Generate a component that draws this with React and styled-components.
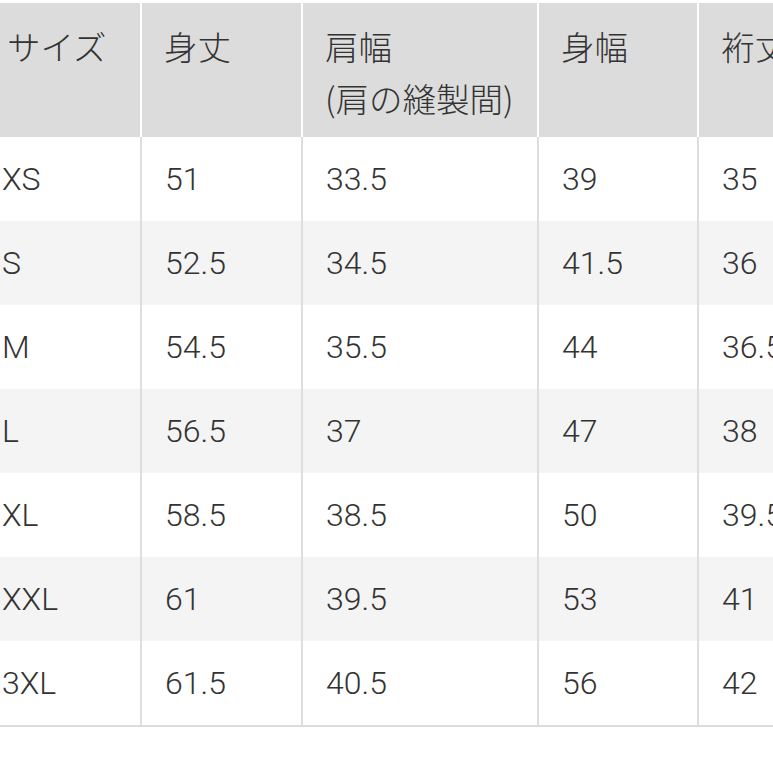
import React from "react";
import styled, { createGlobalStyle } from "styled-components";

const Global = createGlobalStyle`
  html, body { margin: 0; padding: 0; background: #fff; overflow: hidden; }
  body { font-family: "Roboto", "Noto Sans CJK JP", sans-serif; }
`;

const Page = styled.div`
  width: 773px;
  height: 773px;
  overflow: hidden;
  padding-top: 3px;
  box-sizing: border-box;
`;

const Table = styled.div`
  margin-left: -15px;
  width: 900px;
  border-bottom: 2px solid #dcdcdc;
`;

const cols = "155px 161px 236px 160px 188px";

const HeadRow = styled.div`
  display: grid;
  grid-template-columns: ${cols};
  height: 134px;
`;

const HeadCell = styled.div`
  background: #dcdcdc;
  border-left: ${(p) => (p.$first ? "none" : "2px solid #fff")};
  padding: 17px 0 0 ${(p) => (p.$first ? "22px" : "22px")};
  font-family: "Noto Sans CJK JP", "Roboto", sans-serif;
  font-weight: 300;
  font-size: 33.5px;
  line-height: 52px;
  color: #333;
  white-space: nowrap;
`;

const Row = styled.div`
  display: grid;
  grid-template-columns: ${cols};
  height: 84px;
  background: ${(p) => (p.$alt ? "#f4f4f4" : "#fff")};
`;

const Cell = styled.div`
  display: flex;
  align-items: center;
  border-left: ${(p) => (p.$first ? "none" : "2px solid #dedede")};
  padding-left: ${(p) => (p.$first ? "17px" : "23px")};
  font-family: "Roboto", "Noto Sans CJK JP", sans-serif;
  font-weight: 300;
  font-size: 32px;
  color: #333;
  white-space: nowrap;
`;

const headers = [["サイズ"], ["身丈"], ["肩幅", "(肩の縫製間)"], ["身幅"], ["裄丈"]];
const rows = [
  ["XS", "51", "33.5", "39", "35"],
  ["S", "52.5", "34.5", "41.5", "36"],
  ["M", "54.5", "35.5", "44", "36.5"],
  ["L", "56.5", "37", "47", "38"],
  ["XL", "58.5", "38.5", "50", "39.5"],
  ["XXL", "61", "39.5", "53", "41"],
  ["3XL", "61.5", "40.5", "56", "42"],
];

export default function App() {
  return (
    <Page>
      <Global />
      <Table>
        <HeadRow>
          {headers.map((h, i) => (
            <HeadCell key={i} $first={i === 0}>
              {h.map((line, j) => (
                <div key={j}>{line}</div>
              ))}
            </HeadCell>
          ))}
        </HeadRow>
        {rows.map((r, i) => (
          <Row key={i} $alt={i % 2 === 1}>
            {r.map((v, j) => (
              <Cell key={j} $first={j === 0}>
                {v}
              </Cell>
            ))}
          </Row>
        ))}
      </Table>
    </Page>
  );
}
